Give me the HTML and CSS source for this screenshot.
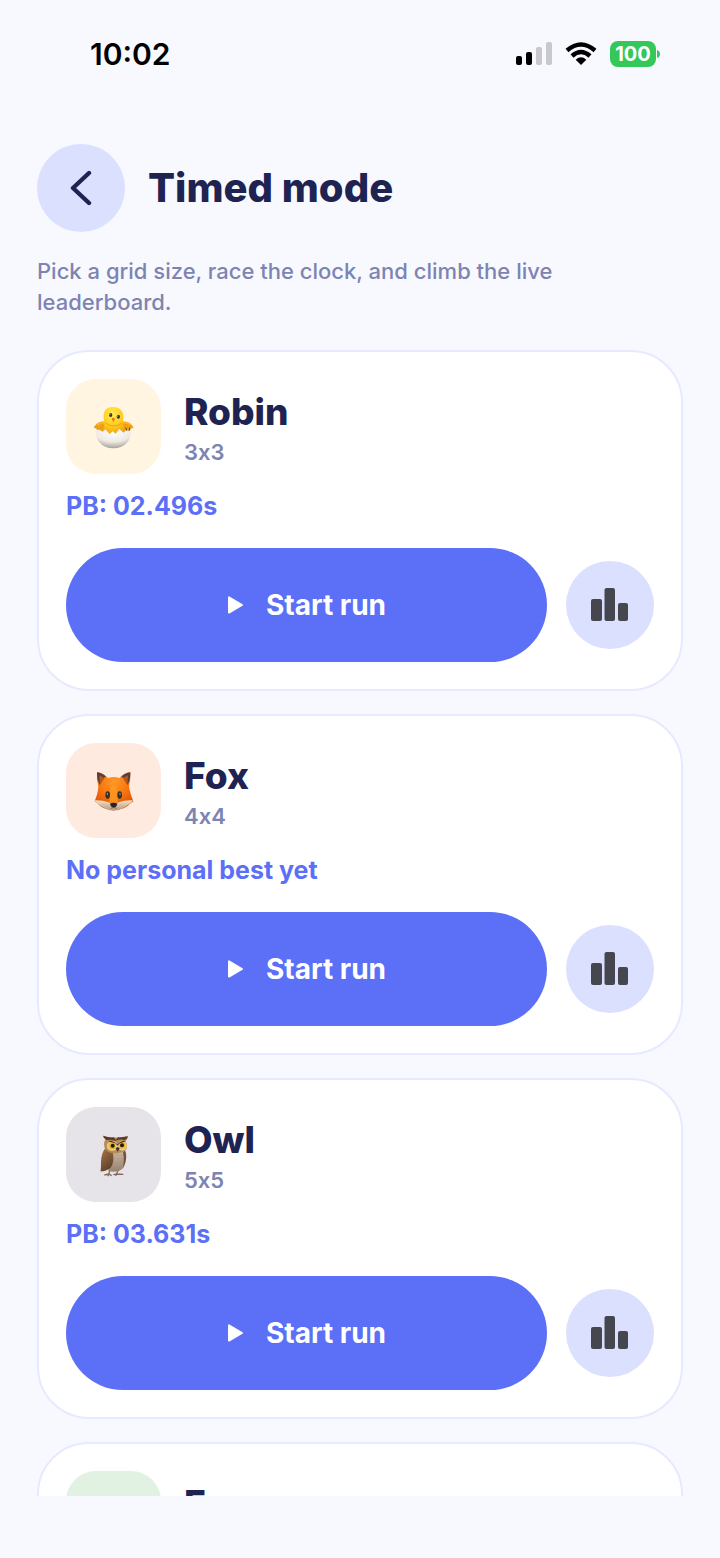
FILE: index.html
```html
<!DOCTYPE html>
<html lang="en">
<head>
<meta charset="utf-8">
<meta name="viewport" content="width=device-width, initial-scale=1">
<title>Timed mode</title>
<link rel="stylesheet" href="styles.css">
</head>
<body>
<svg width="0" height="0" class="defs" aria-hidden="true">
  <defs>
    <symbol id="play" viewBox="0 0 16 20"><path d="M2 2.400v15.200L15 10z" fill="#fff" stroke="#fff" stroke-width="2" stroke-linejoin="round"/></symbol>
    <symbol id="bars" viewBox="0 0 38 34"><g fill="#46464f"><rect x="0" y="11" width="11" height="22" rx="2"/><rect x="13.500" y="0" width="10.500" height="33" rx="2"/><rect x="27" y="15" width="10" height="18" rx="2"/></g></symbol>
  </defs>
</svg>
<div class="screen">
  <div class="status">
    <time class="clock">10:02</time>
    <div class="indicators">
      <svg class="signal" viewBox="0 0 36 24" aria-label="Signal"><rect x="0" y="14" width="6" height="9" rx="2"/><rect x="10" y="10" width="6" height="13" rx="2"/><g fill="#c8c8ce"><rect x="20" y="5" width="6" height="18" rx="2"/><rect x="30" y="0" width="6" height="23" rx="2"/></g></svg>
      <svg class="wifi" viewBox="0 0 32 24" aria-label="Wi-Fi"><g fill="none" stroke="#000" stroke-width="4.400"><path d="M2 8.500Q16-3.500 30 8.500"/><path d="M7 14Q16 6 25 14"/></g><path d="M16 23l-5.300-5.300Q16 13 21.300 17.700z"/></svg>
      <div class="battery"><span class="level">100</span><svg class="tip" viewBox="0 0 3 8"><path d="M0 0Q3 1 3 4T0 8z" fill="#34c759"/></svg></div>
    </div>
  </div>
  <main class="content">
    <header class="header">
      <button class="round" type="button" aria-label="Back"><svg class="chevron" viewBox="0 0 22 36"><path d="M19 3L3 18l16 15" fill="none" stroke="#1e2352" stroke-width="4.400" stroke-linecap="round" stroke-linejoin="round"/></svg></button>
      <h1 class="title">Timed mode</h1>
    </header>
    <p class="intro">Pick a grid size, race the clock, and climb the live leaderboard.</p>
    <div class="cards">
      <section class="card">
        <div class="level-head">
          <div class="avatar avatar-robin">
            <svg class="animal" viewBox="-4 4 180 180" aria-hidden="true">
              <defs>
                <radialGradient id="chick" cx=".45" cy=".25" r=".8"><stop offset="0" stop-color="#ffed4f"/><stop offset=".55" stop-color="#ffca1f"/><stop offset="1" stop-color="#f09a0c"/></radialGradient>
                <radialGradient id="shell" cx=".5" cy=".15" r=".85"><stop offset="0" stop-color="#fff"/><stop offset=".6" stop-color="#eeeae3"/><stop offset="1" stop-color="#a5a099"/></radialGradient>
              </defs>
              <path d="M62 78C46 75 30 82 25 98c5-2 8 0 10 5l7-1 20 12zM108 78c16-3 32 4 37 20-5-2-8 0-10 5l-7-1-20 12z" fill="#eda015"/>
              <path d="M36 88q14-10 26-4M108 84q15-7 27 4" fill="none" stroke="#f8b929" stroke-width="5"/>
              <path d="M55 62C55 43 66 34 83 34s30 10 31 28c1 10-3 18 0 25l6 32H50l6-28c2-11-1-19-1-29z" fill="url(#chick)"/>
              <path d="M60 82q22 17 50 1" fill="none" stroke="#eda60e" stroke-width="3"/>
              <path d="M31 105l9-3 8 10 12-11 13 14 9-8 9 7 11-14 13 11 9-9 13 6c0 27-20 50-53 50s-53-23-53-53z" fill="url(#shell)"/>
              <path d="M121 96l4 9M133 96l-2 10" stroke="#69401c" stroke-width="3"/>
              <ellipse cx="76" cy="58" rx="5" ry="6" fill="#35343b"/><ellipse cx="99" cy="63" rx="5" ry="6" fill="#35343b"/>
              <circle cx="74" cy="56" r="1.500" fill="#fff"/><circle cx="97" cy="61" r="1.500" fill="#fff"/>
              <path d="M79 69q5-6 10 1l-5 10z" fill="#ed7417"/>
            </svg>
          </div>
          <div class="labels"><h2 class="name">Robin</h2><p class="size">3x3</p></div>
        </div>
        <p class="best">PB: 02.496s</p>
        <div class="actions">
          <button class="start" type="button"><svg class="play"><use href="#play"/></svg>Start run</button>
          <button class="round" type="button" aria-label="Robin leaderboard"><svg class="bars"><use href="#bars"/></svg></button>
        </div>
      </section>
      <section class="card">
        <div class="level-head">
          <div class="avatar avatar-fox">
            <svg class="animal" viewBox="-4 0 180 180" aria-hidden="true">
              <defs>
                <radialGradient id="fur" cx=".5" cy=".25" r=".75"><stop offset="0" stop-color="#ff9828"/><stop offset=".5" stop-color="#f77712"/><stop offset="1" stop-color="#d94b05"/></radialGradient>
                <linearGradient id="muzzle" x2="0" y2="1"><stop offset="0" stop-color="#f5dfc2"/><stop offset="1" stop-color="#b09a82"/></linearGradient>
              </defs>
              <path d="M35 34q19 2 33 17 18-6 34 0 14-15 33-17 1 23-4 42 2 18 13 45l-8 5q-15 20-51 22-35-2-49-22l-8-5q11-27 11-45-6-21-4-42z" fill="url(#fur)"/>
              <path d="M35 34q17 2 27 13-12 3-19 24-9-16-8-37zM135 34q-17 2-27 13 12 3 19 24 9-16 8-37z" fill="#594038"/>
              <path d="M42 43l15 8-13 22zM128 43l-15 8 13 22z" fill="#b9571d"/>
              <path d="M27 118q24-1 43 6 7 5 15 5t15-5q19-7 43-6-11 14-24 20-17 11-34 11t-34-11q-13-6-24-20z" fill="url(#muzzle)"/>
              <path d="M76 78q9-8 18 0l4 46q-13 6-26 0z" fill="#ff9c22" opacity=".75"/>
              <ellipse cx="67" cy="102" rx="7" ry="11" fill="#35302e"/><ellipse cx="103" cy="102" rx="7" ry="11" fill="#35302e"/>
              <ellipse cx="66" cy="99" rx="2" ry="4" fill="#8f8f94"/><ellipse cx="104" cy="99" rx="2" ry="4" fill="#8f8f94"/>
              <path d="M74 128q11-6 22 0-2 10-11 12-9-2-11-12z" fill="#2a2323"/><path d="M76 142q9-5 18 0" fill="none" stroke="#62473a" stroke-width="2"/>
            </svg>
          </div>
          <div class="labels"><h2 class="name">Fox</h2><p class="size">4x4</p></div>
        </div>
        <p class="best">No personal best yet</p>
        <div class="actions">
          <button class="start" type="button"><svg class="play"><use href="#play"/></svg>Start run</button>
          <button class="round" type="button" aria-label="Fox leaderboard"><svg class="bars"><use href="#bars"/></svg></button>
        </div>
      </section>
      <section class="card">
        <div class="level-head">
          <div class="avatar avatar-owl">
            <svg class="animal" viewBox="-4 4 180 180" aria-hidden="true">
              <defs>
                <linearGradient id="wing" x2=".5" y2="1"><stop offset="0" stop-color="#a87849"/><stop offset="1" stop-color="#60412b"/></linearGradient>
                <linearGradient id="belly" x2="0" y2="1"><stop offset="0" stop-color="#d2c1ae"/><stop offset="1" stop-color="#97816e"/></linearGradient>
              </defs>
              <path d="M75 137l-5 14M99 137l-5 14M57 154l14-3 8 5M84 153l10-2 20 1M71 151l-3 7M94 151l-3 6" fill="none" stroke="#806d60" stroke-width="4"/>
              <path d="M71 80q23-12 48 1 6 35-8 55-15 13-42 6z" fill="url(#belly)"/>
              <path d="M60 73q-13 17-13 43 0 23-2 27 18 0 31-11 11-14 7-43z" fill="url(#wing)"/>
              <path d="M119 80q7 16 1 37l-7 18q4-29 0-50z" fill="#765335"/>
              <path d="M53 36q15 6 32 5 20 1 43-3-1 9-7 14 9 18 0 28-11 9-29 9-22 1-32-12-8-16 1-31-7-3-8-10z" fill="#b58b58"/>
              <path d="M53 36q17 6 31 5l12 11-22-4-11 1q-8-6-10-13zM128 38q-17 4-30 3l-8 10q16-6 28-2 8-3 10-11z" fill="#5b3b29"/>
              <ellipse cx="81" cy="67" rx="17" ry="15" fill="#e7c58d"/><ellipse cx="111" cy="66" rx="14" ry="15" fill="#e7c58d"/>
              <circle cx="81" cy="66" r="10" fill="#e9ba18"/><circle cx="110" cy="65" r="10" fill="#e9ba18"/>
              <circle cx="82" cy="66" r="6" fill="#221a18"/><circle cx="110" cy="65" r="6" fill="#221a18"/>
              <path d="M70 51q17 1 26 11 8-10 23-11l-1 3-15 5-6 7-7-7-18-5z" fill="#4b3022"/>
              <path d="M91 74q6-7 12 0l-6 10z" fill="#333034"/>
              <path d="M79 92l37 2M79 104l37 1M79 116l34 1M76 128l34 1M87 88l-2 48M98 88v49M109 88l-3 47" stroke="#a18b78" stroke-width="1" opacity=".6"/>
            </svg>
          </div>
          <div class="labels"><h2 class="name">Owl</h2><p class="size">5x5</p></div>
        </div>
        <p class="best">PB: 03.631s</p>
        <div class="actions">
          <button class="start" type="button"><svg class="play"><use href="#play"/></svg>Start run</button>
          <button class="round" type="button" aria-label="Owl leaderboard"><svg class="bars"><use href="#bars"/></svg></button>
        </div>
      </section>
      <section class="card">
        <div class="level-head">
          <div class="avatar avatar-frog"></div>
          <div class="labels"><h2 class="name">Frog</h2></div>
        </div>
      </section>
    </div>
  </main>
</div>
</body>
</html>
```

FILE: styles.css
```css
* { box-sizing: border-box; }
body {
  margin: 0;
  background: #f8f9ff;
  color: #1e2352;
  font-family: Inter, "Noto Sans", sans-serif;
}
h1, h2, p { margin: 0; }
button {
  border: 0;
  padding: 0;
  font: inherit;
  cursor: pointer;
}
svg { display: block; flex: none; }
.defs { position: absolute; }
.screen {
  display: flex;
  flex-direction: column;
  height: 100vh;
  padding-bottom: 62px;
}
.status {
  flex: none;
  display: flex;
  justify-content: space-between;
  align-items: center;
  height: 107px;
  padding: 0 60px 0 90px;
  color: #000;
}
.clock { font-size: 30px; font-weight: 600; }
.indicators { display: flex; align-items: center; gap: 13px; }
.signal { width: 36px; height: 24px; }
.wifi { width: 32px; height: 24px; }
.battery { display: flex; align-items: center; gap: 1px; }
.level {
  width: 46px;
  border-radius: 8px;
  background: #34c759;
  color: #fff;
  font-size: 20px;
  font-weight: 700;
  line-height: 26px;
  text-align: center;
}
.tip { width: 3px; height: 8px; }
.content {
  flex: 1;
  min-height: 0;
  overflow: hidden;
  padding: 37px 37px 0;
}
.header { display: flex; align-items: center; gap: 23px; }
.round {
  flex: none;
  display: grid;
  place-items: center;
  width: 88px;
  height: 88px;
  border-radius: 50%;
  background: #dce0ff;
}
.chevron { width: 22px; height: 36px; }
.title { font-size: 40px; font-weight: 800; line-height: 48px; }
.intro {
  margin: 24px 0 32px;
  color: #7d84b2;
  font-size: 22px;
  font-weight: 500;
  line-height: 31px;
}
.cards { display: flex; flex-direction: column; gap: 23px; }
.card {
  padding: 27px;
  border: 2px solid #e6e9ff;
  border-radius: 52px;
  background: #fff;
}
.level-head { display: flex; align-items: center; gap: 23px; }
.avatar {
  display: grid;
  place-items: center;
  width: 95px;
  height: 95px;
  border-radius: 30px;
}
.avatar-robin { background: #fff5e1; }
.avatar-fox { background: #ffeadf; }
.avatar-owl { background: #e7e4e9; }
.avatar-frog { background: #e1f2e3; }
.animal { width: 60px; height: 60px; }
.labels { min-height: 80px; }
.name { font-size: 37px; font-weight: 800; line-height: 50px; }
.size {
  color: #7d84b2;
  font-size: 22px;
  font-weight: 600;
  line-height: 30px;
  font-variant-ligatures: no-contextual;
}
.best {
  padding: 16px 0 26px;
  color: #5c6ff7;
  font-size: 25px;
  font-weight: 700;
  line-height: 32px;
}
.actions { display: flex; align-items: center; gap: 19px; }
.start {
  flex: 1;
  display: flex;
  align-items: center;
  justify-content: center;
  gap: 23px;
  height: 114px;
  border-radius: 57px;
  background: #5c6ff7;
  color: #fff;
  font-size: 28px;
  font-weight: 700;
}
.play { width: 16px; height: 20px; }
.bars { width: 38px; height: 34px; }
```
